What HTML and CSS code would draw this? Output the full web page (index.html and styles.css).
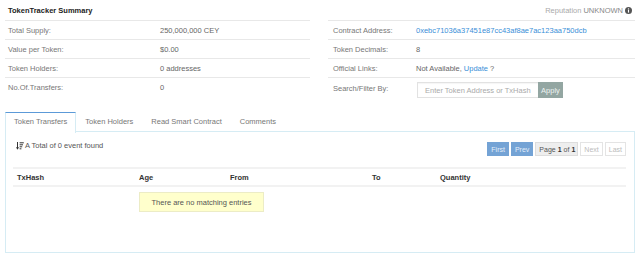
FILE: index.html
```html
<!DOCTYPE html>
<html>
<head>
<meta charset="utf-8">
<link rel="stylesheet" href="styles.css">
</head>
<body>
<div class="page">
  <div class="summary">
    <div class="col">
      <div class="col-head"><span class="title">TokenTracker Summary</span></div>
      <div class="row left-row"><span class="lbl">Total Supply:</span><span class="val">250,000,000 CEY</span></div>
      <div class="row left-row"><span class="lbl">Value per Token:</span><span class="val">$0.00</span></div>
      <div class="row left-row"><span class="lbl">Token Holders:</span><span class="val">0 addresses</span></div>
      <div class="row left-row last"><span class="lbl">No.Of.Transfers:</span><span class="val">0</span></div>
    </div>
    <div class="col">
      <div class="col-head rep">Reputation <span class="unk">UNKNOWN</span>
        <svg class="info" viewBox="0 0 10 10" width="7" height="7"><circle cx="5" cy="5" r="5" fill="#555"/><rect x="4.2" y="4.2" width="1.6" height="3.8" fill="#fff"/><circle cx="5" cy="2.7" r="0.95" fill="#fff"/></svg>
      </div>
      <div class="row right-row"><span class="lbl">Contract Address:</span><span class="val link">0xebc71036a37451e87cc43af8ae7ac123aa750dcb</span></div>
      <div class="row right-row"><span class="lbl">Token Decimals:</span><span class="val">8</span></div>
      <div class="row right-row"><span class="lbl">Official Links:</span><span class="val">Not Available, <span class="link">Update</span> ?</span></div>
      <div class="row right-row search-row"><span class="lbl">Search/Filter By:</span>
        <span class="search"><span class="input">Enter Token Address or TxHash</span><span class="apply">Apply</span></span>
      </div>
    </div>
  </div>

  <div class="tabs">
    <span class="tab active">Token Transfers</span>
    <span class="tab">Token Holders</span>
    <span class="tab">Read Smart Contract</span>
    <span class="tab">Comments</span>
  </div>

  <div class="panel">
    <div class="panel-top">
      <div class="found">
        <svg class="sort" viewBox="0 0 8 8" width="8" height="8">
          <rect x="1" y="0" width="1" height="6.5" fill="#333"/>
          <path d="M0 5.2 L1.5 7.8 L3 5.2 Z" fill="#333"/>
          <rect x="3.6" y="0.3" width="4.2" height="1" fill="#333"/>
          <rect x="3.6" y="2.3" width="3.4" height="1" fill="#333"/>
          <rect x="3.6" y="4.3" width="2.6" height="1" fill="#333"/>
          <rect x="3.6" y="6.3" width="1.8" height="1" fill="#333"/>
        </svg>A Total of 0 event found
      </div>
      <div class="pager">
        <span class="pg blue">First</span>
        <span class="pg blue">Prev</span>
        <span class="pg cur">Page <b>1</b> of <b>1</b></span>
        <span class="pg off">Next</span>
        <span class="pg off">Last</span>
      </div>
    </div>
    <div class="table">
      <div class="thead">
        <span>TxHash</span><span>Age</span><span>From</span><span>To</span><span>Quantity</span>
      </div>
      <div class="empty">There are no matching entries</div>
    </div>
  </div>
</div>
</body>
</html>
```

FILE: styles.css
```css
* { box-sizing: border-box; }
body {
  margin: 0;
  background: #fff;
  font-family: "Liberation Sans", Arial, sans-serif;
  font-size: 7.5px;
  color: #666;
}
.page {
  padding: 0 5px;
}
.summary {
  display: grid;
  grid-template-columns: 305px 307px;
  column-gap: 18px;
  margin-bottom: 10px;
}
.col-head {
  height: 21px;
  border-bottom: 1px solid #e8e8e8;
  display: flex;
  align-items: center;
  padding-left: 3px;
}
.title {
  font-weight: bold;
  color: #222;
  font-size: 7.5px;
}
.rep {
  justify-content: flex-end;
  padding-right: 3px;
  color: #aaa;
}
.unk { color: #888; margin-left: 2px; margin-right: 2px; }
.info { display: block; }
.row {
  display: flex;
  align-items: center;
  height: 19px;
  border-bottom: 1px solid #e8e8e8;
}
.row.last { border-bottom: none; }
.left-row .lbl { width: 155px; padding-left: 3px; color: #777; }
.right-row .lbl { width: 88px; padding-left: 5px; color: #777; }
.val { color: #666; }
.link { color: #3a8fd8; }
.search-row {
  border-bottom: none;
  height: 24px;
  align-items: flex-start;
  padding-top: 4px;
}
.search-row .lbl { padding-top: 2px; }
.search {
  display: flex;
  height: 16px;
  margin-left: 1px;
}
.input {
  width: 121px;
  border: 1px solid #e2e2e2;
  border-right: none;
  color: #aaa;
  padding-left: 7px;
  display: flex;
  align-items: center;
  box-shadow: inset 0 1px 1px rgba(0,0,0,0.04);
}
.apply {
  width: 25px;
  background: #93a6a2;
  color: #eef3f2;
  display: flex;
  align-items: center;
  justify-content: center;
}
.tabs {
  display: flex;
  height: 20px;
  position: relative;
  z-index: 1;
}
.tab {
  padding: 0 9px 2px;
  display: flex;
  align-items: center;
  color: #777;
  height: 20px;
  border-top: 1px solid transparent;
}
.tab.active {
  border-top: 1px solid #5c9ad8;
  border-left: 1px solid #d6ecf4;
  border-right: 1px solid #d6ecf4;
  background: #fff;
  height: 21px;
  padding: 0 8px 3px;
}
.panel {
  border: 1px solid #d6ecf4;
  height: 122px;
  margin-top: -1px;
  padding: 0 8px 0 7px;
}
.panel-top {
  display: flex;
  justify-content: space-between;
  align-items: flex-start;
  height: 35px;
  padding-top: 9px;
}
.found {
  display: flex;
  align-items: center;
  padding-left: 3px;
  color: #555;
}
.sort { margin-right: 1px; display: block; }
.pager {
  display: flex;
  gap: 2px;
  padding-top: 1px;
}
.pg {
  height: 14px;
  display: flex;
  align-items: center;
  padding: 0 3px;
  border: 1px solid #ddd;
  font-size: 7px;
}
.pg.blue {
  background: #74a3d5;
  border-color: #74a3d5;
  color: #e3eefa;
}
.pg.cur {
  background: #eee;
  color: #555;
  padding: 0 2px 0 3px;
}
.pg.cur b { color: #333; margin: 0 2px; }
.pg.cur b:last-child { margin-right: 0; }
.pg.off {
  background: #fff;
  color: #bbb;
  border-color: #e4e4e4;
}
.thead {
  display: grid;
  grid-template-columns: 122px 91px 142px 68px 1fr;
  border-top: 2px solid #f2f2f2;
  border-bottom: 2px solid #f2f2f2;
  height: 20px;
  align-items: center;
  font-weight: bold;
  color: #333;
}
.thead span { padding-left: 4px; }
.empty {
  margin-left: 126px;
  margin-top: 5px;
  width: 125px;
  height: 20px;
  background: #ffffcc;
  border: 1px solid #ececc6;
  color: #555;
  display: flex;
  align-items: center;
  justify-content: center;
}
```
